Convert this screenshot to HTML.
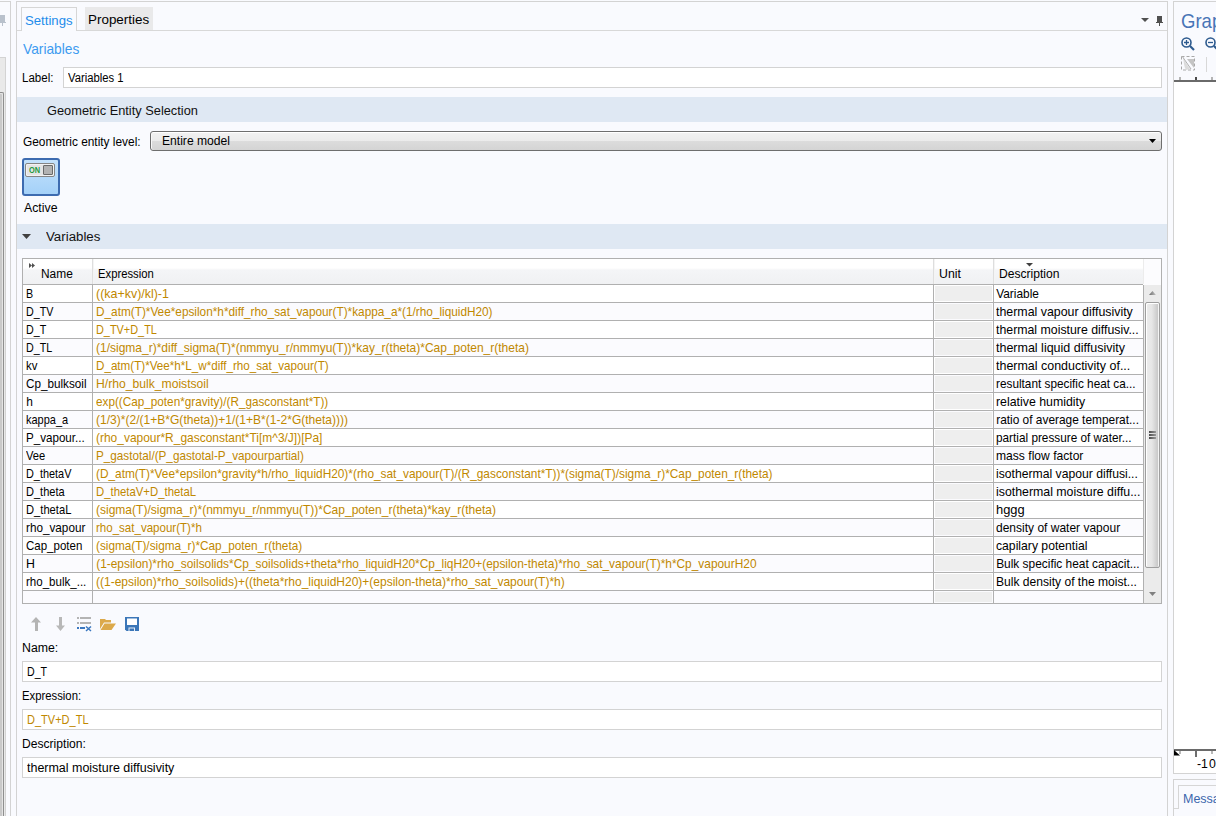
<!DOCTYPE html>
<html><head><meta charset="utf-8">
<style>
*{box-sizing:border-box;margin:0;padding:0}
html,body{width:1216px;height:816px;overflow:hidden;background:#f9fafe;font-family:"Liberation Sans",sans-serif;color:#000;position:relative}
.a{position:absolute;white-space:pre;line-height:1;transform-origin:0 0}
.bx{position:absolute}
svg{position:absolute;overflow:visible}
</style></head><body>
<div class="bx" style="left:10px;top:1px;width:1px;height:815px;background:#d3d3d3"></div>
<div class="bx" style="left:0;top:1px;width:10px;height:1px;background:#d3d3d3"></div>
<div class="bx" style="left:0;top:57px;width:6px;height:759px;background:#e9e9e9;border-right:1px solid #d3d3d3;border-top:1px solid #d3d3d3"></div>
<div class="bx" style="left:0;top:92px;width:4px;height:724px;background:#c9c9c9;border-right:1px solid #8e8e8e;border-top:1px solid #8e8e8e;border-top-right-radius:2px;box-shadow:inset -1px 1px 0 #e4e4e4"></div>
<div class="bx" style="left:0;top:15px;width:5px;height:7px;background:#b9c1cc"></div>
<div class="bx" style="left:0;top:22px;width:6px;height:1px;background:#b9c1cc"></div>
<div class="bx" style="left:2px;top:23px;width:1px;height:3px;background:#b9c1cc"></div>
<div class="bx" style="left:16px;top:1px;width:1152px;height:815px;border-left:1px solid #d3d3d3;border-top:1px solid #d3d3d3;border-right:1px solid #d3d3d3"></div>
<div class="bx" style="left:17px;top:30px;width:1150px;height:1px;background:#d8d8d8"></div>
<div class="bx" style="left:21px;top:7px;width:56px;height:24px;background:#f9fafe;border:1px solid #d6d6d6;border-bottom:none"></div>
<div class="bx" style="left:85px;top:7px;width:68px;height:23px;background:#e9e9ea"></div>
<svg style="left:1141px;top:18px" width="8" height="4"><path d="M0 0H8L4 4Z" fill="#505050"/></svg>
<div class="bx" style="left:1157px;top:16px;width:5px;height:6px;background:#505050"></div>
<div class="bx" style="left:1156px;top:22px;width:7px;height:1px;background:#505050"></div>
<div class="bx" style="left:1159px;top:23px;width:1px;height:3px;background:#505050"></div>
<div class="bx" style="left:63px;top:67px;width:1099px;height:21px;background:#fff;border:1px solid #d3d3d3"></div>
<div class="bx" style="left:17px;top:97px;width:1150px;height:25px;background:#dfe8f3"></div>
<div class="bx" style="left:150px;top:131px;width:1012px;height:20px;border:1px solid #6e6e6e;border-radius:3px;box-shadow:inset 0 1px 0 #fff,inset 1px 0 0 #f8f8f8;background:linear-gradient(#f2f2f2 0,#ebebeb 50%,#dcdcdc 51%,#d4d4d4 100%)"></div>
<svg style="left:1149px;top:139px" width="7" height="4"><path d="M0 0H7L3.5 4Z" fill="#000"/></svg>
<div class="bx" style="left:22px;top:158px;width:38px;height:38px;border:2px solid #3d6bb0;border-radius:3px;background:linear-gradient(#c4e2fc,#a4d1f8)"></div>
<div class="bx" style="left:25px;top:163px;width:30px;height:14px;border:1px solid #858585;border-radius:2px;background:#e4e4e4;box-shadow:inset 0 0 0 1px #f2f2f2"></div>
<div class="a" style="left:28.6px;top:165.5px;font-size:8.6px;font-weight:bold;color:#1f9a3e;transform:scaleX(.86);transform-origin:0 0">ON</div>
<div class="bx" style="left:43px;top:165px;width:10px;height:10px;border:1px solid #6a6a6a;border-radius:1px;background:#b2b2b2"></div>
<div class="bx" style="left:17px;top:224px;width:1150px;height:25px;background:#dfe8f3"></div>
<svg style="left:22px;top:234px" width="9" height="5"><path d="M0 0H9L4.5 5Z" fill="#404040"/></svg>
<div class="bx" style="left:22px;top:258px;width:1140px;height:346px;background:#fff;border:1px solid #b0b0b0"></div>
<div class="bx" style="left:23px;top:259px;width:1120px;height:25px;background:linear-gradient(#fff 0,#fff 36%,#f4f5f7 44%,#f0f1f3 100%)"></div>
<div class="bx" style="left:1143px;top:259px;width:1px;height:25px;background:#ececec"></div>
<div class="bx" style="left:1144px;top:259px;width:17px;height:26px;background:#fcfcfe"></div>
<div class="bx" style="left:92px;top:259px;width:1px;height:25px;background:#dedede"></div>
<div class="bx" style="left:93px;top:259px;width:1px;height:25px;background:#f4f4f4"></div>
<div class="bx" style="left:933px;top:259px;width:1px;height:25px;background:#dedede"></div>
<div class="bx" style="left:934px;top:259px;width:1px;height:25px;background:#f4f4f4"></div>
<div class="bx" style="left:993px;top:259px;width:1px;height:25px;background:#dedede"></div>
<div class="bx" style="left:994px;top:259px;width:1px;height:25px;background:#f4f4f4"></div>
<div class="bx" style="left:23px;top:284px;width:1120px;height:1px;background:#b0b0b0"></div>
<svg style="left:29px;top:263px" width="7" height="5"><path d="M0 0L3 2.5L0 5ZM3 0L6 2.5L3 5Z" fill="#505050"/></svg>
<svg style="left:1026px;top:263px" width="7" height="4"><path d="M0 0H7L3.5 3.5Z" fill="#404040"/></svg>
<div class="bx" style="left:23px;top:285px;width:1120px;height:17px;background:#fff"></div>
<div class="bx" style="left:23px;top:302px;width:1120px;height:1px;background:#b0b0b0"></div>
<div class="bx" style="left:935px;top:286px;width:57px;height:15px;background:#eeeeee"></div>
<div class="bx" style="left:23px;top:303px;width:1120px;height:17px;background:#fbfbfe"></div>
<div class="bx" style="left:23px;top:320px;width:1120px;height:1px;background:#b0b0b0"></div>
<div class="bx" style="left:935px;top:304px;width:57px;height:15px;background:#eeeeee"></div>
<div class="bx" style="left:23px;top:321px;width:1120px;height:17px;background:#fff"></div>
<div class="bx" style="left:23px;top:338px;width:1120px;height:1px;background:#b0b0b0"></div>
<div class="bx" style="left:935px;top:322px;width:57px;height:15px;background:#eeeeee"></div>
<div class="bx" style="left:23px;top:339px;width:1120px;height:17px;background:#fbfbfe"></div>
<div class="bx" style="left:23px;top:356px;width:1120px;height:1px;background:#b0b0b0"></div>
<div class="bx" style="left:935px;top:340px;width:57px;height:15px;background:#eeeeee"></div>
<div class="bx" style="left:23px;top:357px;width:1120px;height:17px;background:#fff"></div>
<div class="bx" style="left:23px;top:374px;width:1120px;height:1px;background:#b0b0b0"></div>
<div class="bx" style="left:935px;top:358px;width:57px;height:15px;background:#eeeeee"></div>
<div class="bx" style="left:23px;top:375px;width:1120px;height:17px;background:#fbfbfe"></div>
<div class="bx" style="left:23px;top:392px;width:1120px;height:1px;background:#b0b0b0"></div>
<div class="bx" style="left:935px;top:376px;width:57px;height:15px;background:#eeeeee"></div>
<div class="bx" style="left:23px;top:393px;width:1120px;height:17px;background:#fff"></div>
<div class="bx" style="left:23px;top:410px;width:1120px;height:1px;background:#b0b0b0"></div>
<div class="bx" style="left:935px;top:394px;width:57px;height:15px;background:#eeeeee"></div>
<div class="bx" style="left:23px;top:411px;width:1120px;height:17px;background:#fbfbfe"></div>
<div class="bx" style="left:23px;top:428px;width:1120px;height:1px;background:#b0b0b0"></div>
<div class="bx" style="left:935px;top:412px;width:57px;height:15px;background:#eeeeee"></div>
<div class="bx" style="left:23px;top:429px;width:1120px;height:17px;background:#fff"></div>
<div class="bx" style="left:23px;top:446px;width:1120px;height:1px;background:#b0b0b0"></div>
<div class="bx" style="left:935px;top:430px;width:57px;height:15px;background:#eeeeee"></div>
<div class="bx" style="left:23px;top:447px;width:1120px;height:17px;background:#fbfbfe"></div>
<div class="bx" style="left:23px;top:464px;width:1120px;height:1px;background:#b0b0b0"></div>
<div class="bx" style="left:935px;top:448px;width:57px;height:15px;background:#eeeeee"></div>
<div class="bx" style="left:23px;top:465px;width:1120px;height:17px;background:#fff"></div>
<div class="bx" style="left:23px;top:482px;width:1120px;height:1px;background:#b0b0b0"></div>
<div class="bx" style="left:935px;top:466px;width:57px;height:15px;background:#eeeeee"></div>
<div class="bx" style="left:23px;top:483px;width:1120px;height:17px;background:#fbfbfe"></div>
<div class="bx" style="left:23px;top:500px;width:1120px;height:1px;background:#b0b0b0"></div>
<div class="bx" style="left:935px;top:484px;width:57px;height:15px;background:#eeeeee"></div>
<div class="bx" style="left:23px;top:501px;width:1120px;height:17px;background:#fff"></div>
<div class="bx" style="left:23px;top:518px;width:1120px;height:1px;background:#b0b0b0"></div>
<div class="bx" style="left:935px;top:502px;width:57px;height:15px;background:#eeeeee"></div>
<div class="bx" style="left:23px;top:519px;width:1120px;height:17px;background:#fbfbfe"></div>
<div class="bx" style="left:23px;top:536px;width:1120px;height:1px;background:#b0b0b0"></div>
<div class="bx" style="left:935px;top:520px;width:57px;height:15px;background:#eeeeee"></div>
<div class="bx" style="left:23px;top:537px;width:1120px;height:17px;background:#fff"></div>
<div class="bx" style="left:23px;top:554px;width:1120px;height:1px;background:#b0b0b0"></div>
<div class="bx" style="left:935px;top:538px;width:57px;height:15px;background:#eeeeee"></div>
<div class="bx" style="left:23px;top:555px;width:1120px;height:17px;background:#fbfbfe"></div>
<div class="bx" style="left:23px;top:572px;width:1120px;height:1px;background:#b0b0b0"></div>
<div class="bx" style="left:935px;top:556px;width:57px;height:15px;background:#eeeeee"></div>
<div class="bx" style="left:23px;top:573px;width:1120px;height:17px;background:#fff"></div>
<div class="bx" style="left:23px;top:590px;width:1120px;height:1px;background:#b0b0b0"></div>
<div class="bx" style="left:935px;top:574px;width:57px;height:15px;background:#eeeeee"></div>
<div class="bx" style="left:23px;top:591px;width:1120px;height:12px;background:#fbfbfe"></div>
<div class="bx" style="left:935px;top:592px;width:57px;height:10px;background:#eeeeee"></div>
<div class="bx" style="left:92px;top:285px;width:1px;height:318px;background:#b0b0b0"></div>
<div class="bx" style="left:933px;top:285px;width:1px;height:318px;background:#b0b0b0"></div>
<div class="bx" style="left:993px;top:285px;width:1px;height:318px;background:#b0b0b0"></div>
<div class="bx" style="left:1143px;top:285px;width:1px;height:318px;background:#b0b0b0"></div>
<div class="a" style="left:26.20px;top:289px;font-size:11.9px;color:#000;transform:scaleX(0.9000);">B</div>
<div class="a" style="left:96.20px;top:289px;font-size:11.9px;color:#c08800;transform:scaleX(1.0464);">((ka+kv)/kl)-1</div>
<div class="a" style="left:996.20px;top:289px;font-size:11.9px;color:#000;">Variable</div>
<div class="a" style="left:26.20px;top:307px;font-size:11.9px;color:#000;transform:scaleX(0.9000);">D_TV</div>
<div class="a" style="left:96.20px;top:307px;font-size:11.9px;color:#c08800;transform:scaleX(0.9922);">D_atm(T)*Vee*epsilon*h*diff_rho_sat_vapour(T)*kappa_a*(1/rho_liquidH20)</div>
<div class="a" style="left:996.20px;top:307px;font-size:11.9px;color:#000;transform:scaleX(1.0420);">thermal vapour diffusivity</div>
<div class="a" style="left:26.20px;top:325px;font-size:11.9px;color:#000;transform:scaleX(0.9000);">D_T</div>
<div class="a" style="left:96.20px;top:325px;font-size:11.9px;color:#c08800;transform:scaleX(0.9167);">D_TV+D_TL</div>
<div class="a" style="left:996.20px;top:325px;font-size:11.9px;color:#000;transform:scaleX(1.0365);">thermal moisture diffusiv...</div>
<div class="a" style="left:26.20px;top:343px;font-size:11.9px;color:#000;transform:scaleX(0.9000);">D_TL</div>
<div class="a" style="left:96.20px;top:343px;font-size:11.9px;color:#c08800;transform:scaleX(1.0084);">(1/sigma_r)*diff_sigma(T)*(nmmyu_r/nmmyu(T))*kay_r(theta)*Cap_poten_r(theta)</div>
<div class="a" style="left:996.20px;top:343px;font-size:11.9px;color:#000;transform:scaleX(1.0504);">thermal liquid diffusivity</div>
<div class="a" style="left:26.20px;top:361px;font-size:11.9px;color:#000;transform:scaleX(0.9583);">kv</div>
<div class="a" style="left:96.20px;top:361px;font-size:11.9px;color:#c08800;transform:scaleX(0.9789);">D_atm(T)*Vee*h*L_w*diff_rho_sat_vapour(T)</div>
<div class="a" style="left:996.20px;top:361px;font-size:11.9px;color:#000;transform:scaleX(1.0472);">thermal conductivity of...</div>
<div class="a" style="left:26.20px;top:379px;font-size:11.9px;color:#000;transform:scaleX(0.9852);">Cp_bulksoil</div>
<div class="a" style="left:96.20px;top:379px;font-size:11.9px;color:#c08800;transform:scaleX(1.0218);">H/rho_bulk_moistsoil</div>
<div class="a" style="left:996.20px;top:379px;font-size:11.9px;color:#000;transform:scaleX(0.9914);">resultant specific heat ca...</div>
<div class="a" style="left:26.20px;top:397px;font-size:11.9px;color:#000;">h</div>
<div class="a" style="left:96.20px;top:397px;font-size:11.9px;color:#c08800;transform:scaleX(0.9872);">exp((Cap_poten*gravity)/(R_gasconstant*T))</div>
<div class="a" style="left:996.20px;top:397px;font-size:11.9px;color:#000;transform:scaleX(1.0384);">relative humidity</div>
<div class="a" style="left:26.20px;top:415px;font-size:11.9px;color:#000;transform:scaleX(0.9239);">kappa_a</div>
<div class="a" style="left:96.20px;top:415px;font-size:11.9px;color:#c08800;transform:scaleX(1.0133);">(1/3)*(2/(1+B*G(theta))+1/(1+B*(1-2*G(theta))))</div>
<div class="a" style="left:996.20px;top:415px;font-size:11.9px;color:#000;">ratio of average temperat...</div>
<div class="a" style="left:26.20px;top:433px;font-size:11.9px;color:#000;transform:scaleX(0.9763);">P_vapour...</div>
<div class="a" style="left:96.20px;top:433px;font-size:11.9px;color:#c08800;transform:scaleX(1.0053);">(rho_vapour*R_gasconstant*Ti[m^3/J])[Pa]</div>
<div class="a" style="left:996.20px;top:433px;font-size:11.9px;color:#000;transform:scaleX(0.9912);">partial pressure of water...</div>
<div class="a" style="left:26.20px;top:451px;font-size:11.9px;color:#000;transform:scaleX(0.9400);">Vee</div>
<div class="a" style="left:96.20px;top:451px;font-size:11.9px;color:#c08800;transform:scaleX(0.9857);">P_gastotal/(P_gastotal-P_vapourpartial)</div>
<div class="a" style="left:996.20px;top:451px;font-size:11.9px;color:#000;transform:scaleX(1.0174);">mass flow factor</div>
<div class="a" style="left:26.20px;top:469px;font-size:11.9px;color:#000;transform:scaleX(0.9160);">D_thetaV</div>
<div class="a" style="left:96.20px;top:469px;font-size:11.9px;color:#c08800;transform:scaleX(0.9968);">(D_atm(T)*Vee*epsilon*gravity*h/rho_liquidH20)*(rho_sat_vapour(T)/(R_gasconstant*T))*(sigma(T)/sigma_r)*Cap_poten_r(theta)</div>
<div class="a" style="left:996.20px;top:469px;font-size:11.9px;color:#000;transform:scaleX(1.0239);">isothermal vapour diffusi...</div>
<div class="a" style="left:26.20px;top:487px;font-size:11.9px;color:#000;transform:scaleX(0.9286);">D_theta</div>
<div class="a" style="left:96.20px;top:487px;font-size:11.9px;color:#c08800;transform:scaleX(0.9552);">D_thetaV+D_thetaL</div>
<div class="a" style="left:996.20px;top:487px;font-size:11.9px;color:#000;transform:scaleX(1.0377);">isothermal moisture diffu...</div>
<div class="a" style="left:26.20px;top:505px;font-size:11.9px;color:#000;transform:scaleX(0.9396);">D_thetaL</div>
<div class="a" style="left:96.20px;top:505px;font-size:11.9px;color:#c08800;transform:scaleX(1.0104);">(sigma(T)/sigma_r)*(nmmyu_r/nmmyu(T))*Cap_poten_r(theta)*kay_r(theta)</div>
<div class="a" style="left:996.20px;top:505px;font-size:11.9px;color:#000;transform:scaleX(1.0846);">hggg</div>
<div class="a" style="left:26.20px;top:523px;font-size:11.9px;color:#000;transform:scaleX(0.9867);">rho_vapour</div>
<div class="a" style="left:96.20px;top:523px;font-size:11.9px;color:#c08800;transform:scaleX(0.9706);">rho_sat_vapour(T)*h</div>
<div class="a" style="left:996.20px;top:523px;font-size:11.9px;color:#000;transform:scaleX(1.0098);">density of water vapour</div>
<div class="a" style="left:26.20px;top:541px;font-size:11.9px;color:#000;transform:scaleX(0.9672);">Cap_poten</div>
<div class="a" style="left:96.20px;top:541px;font-size:11.9px;color:#c08800;transform:scaleX(0.9904);">(sigma(T)/sigma_r)*Cap_poten_r(theta)</div>
<div class="a" style="left:996.20px;top:541px;font-size:11.9px;color:#000;transform:scaleX(1.0247);">capilary potential</div>
<div class="a" style="left:26.20px;top:559px;font-size:11.9px;color:#000;transform:scaleX(1.0375);">H</div>
<div class="a" style="left:96.20px;top:559px;font-size:11.9px;color:#c08800;">(1-epsilon)*rho_soilsolids*Cp_soilsolids+theta*rho_liquidH20*Cp_liqH20+(epsilon-theta)*rho_sat_vapour(T)*h*Cp_vapourH20</div>
<div class="a" style="left:996.20px;top:559px;font-size:11.9px;color:#000;">Bulk specific heat capacit...</div>
<div class="a" style="left:26.20px;top:577px;font-size:11.9px;color:#000;transform:scaleX(0.9705);">rho_bulk_...</div>
<div class="a" style="left:96.20px;top:577px;font-size:11.9px;color:#c08800;transform:scaleX(1.0088);">((1-epsilon)*rho_soilsolids)+((theta*rho_liquidH20)+(epsilon-theta)*rho_sat_vapour(T)*h)</div>
<div class="a" style="left:996.20px;top:577px;font-size:11.9px;color:#000;transform:scaleX(1.0152);">Bulk density of the moist...</div>
<div class="bx" style="left:1144px;top:285px;width:17px;height:318px;background:#ebebeb"></div>
<div class="bx" style="left:1145px;top:302px;width:15px;height:266px;border:1px solid #9e9e9e;border-radius:2px;box-shadow:inset 1px 1px 0 #fff,inset -1px 0 0 #f4f4f4;background:linear-gradient(90deg,#ececec,#e6e6e6 45%,#c9c9c9 90%)"></div>
<svg style="left:1149px;top:291px" width="7" height="4"><defs><linearGradient id="ga"><stop offset="0" stop-color="#6a6a6a"/><stop offset="1" stop-color="#c4c4c4"/></linearGradient></defs><path d="M3.5 0L7 4H0Z" fill="url(#ga)"/></svg>
<svg style="left:1149px;top:592px" width="7" height="4"><path d="M0 0H7L3.5 4Z" fill="#808080"/></svg>
<div class="bx" style="left:1149px;top:431px;width:7px;height:2px;background:linear-gradient(90deg,#4a4a4a,#9a9a9a)"></div>
<div class="bx" style="left:1149px;top:434px;width:7px;height:2px;background:linear-gradient(90deg,#4a4a4a,#9a9a9a)"></div>
<div class="bx" style="left:1149px;top:437px;width:7px;height:2px;background:linear-gradient(90deg,#4a4a4a,#9a9a9a)"></div>
<svg style="left:31px;top:617px" width="11" height="15"><path d="M5 0L10 5.5H7V14H4V5.5H0Z" fill="#b4b4b4"/></svg>
<svg style="left:56px;top:617px" width="10" height="15"><path d="M3 0H6V8.5H9L4.5 14L0 8.5H3Z" fill="#b8b8b8"/></svg>
<svg style="left:77px;top:617px" width="15" height="15"><rect x="0" y="0" width="2" height="2" fill="#b4b4b4"/><rect x="3" y="0" width="11" height="2" fill="#b4b4b4"/><rect x="0" y="5" width="2" height="2" fill="#b4b4b4"/><rect x="3" y="5" width="11" height="2" fill="#b4b4b4"/><rect x="0" y="10" width="2" height="2" fill="#3b78c0"/><rect x="3" y="10" width="5" height="2" fill="#3b78c0"/><path d="M9 9.5L14 14M14 9.5L9 14" stroke="#3b78c0" stroke-width="1.5"/></svg>
<svg style="left:100px;top:619px" width="16" height="11"><path d="M0 0H5L6 1H11V3.5H4L0 10Z" fill="#dca94a"/><path d="M4.5 4.5H16L11.5 11H0.5Z" fill="#dca94a"/></svg>
<svg style="left:125px;top:617px" width="14" height="14"><path d="M0 0H14V14H1.5L0 12.5Z" fill="#3b76b8"/><rect x="2" y="1.5" width="10" height="6.5" fill="#fff"/><rect x="3.5" y="10.5" width="6.5" height="3.5" fill="#e8eef8"/><rect x="4.5" y="11.5" width="4.5" height="2.5" fill="#3b76b8"/></svg>
<div class="bx" style="left:22px;top:661px;width:1140px;height:21px;background:#fff;border:1px solid #d3d3d3"></div>
<div class="bx" style="left:22px;top:709px;width:1140px;height:21px;background:#fff;border:1px solid #d3d3d3"></div>
<div class="bx" style="left:22px;top:757px;width:1140px;height:21px;background:#fff;border:1px solid #d3d3d3"></div>
<div class="bx" style="left:1173px;top:1px;width:43px;height:773px;border-left:1px solid #d3d3d3;border-top:1px solid #d3d3d3;border-bottom:1px solid #d3d3d3"></div>
<div class="bx" style="left:1174px;top:82px;width:42px;height:691px;background:#fff"></div>
<svg style="left:1181px;top:37px" width="14" height="14"><circle cx="5.5" cy="5.5" r="4.5" fill="none" stroke="#2d5a8e" stroke-width="1.6"/><path d="M3 5.5H8M5.5 3V8" stroke="#2d5a8e" stroke-width="1.3"/><path d="M9 9L13 13" stroke="#2d5a8e" stroke-width="2.2"/></svg>
<svg style="left:1205px;top:37px" width="14" height="14"><circle cx="5.5" cy="5.5" r="4.5" fill="none" stroke="#2d5a8e" stroke-width="1.6"/><path d="M3 5.5H8" stroke="#2d5a8e" stroke-width="1.3"/><path d="M9 9L13 13" stroke="#2d5a8e" stroke-width="2.2"/></svg>
<svg style="left:1181px;top:56px" width="14" height="15"><rect x="0.5" y="0.5" width="13" height="13.5" fill="none" stroke="#a8a8a8" stroke-dasharray="3 2"/><path d="M6 3H13V12Z" fill="#c4c4c4"/><path d="M2 1C4 6 7 10 9 13L5 14C3 11 3 7 2 1Z" fill="#dcdcdc"/><path d="M1 0L10 13" stroke="#b0b0b0" stroke-width="1"/></svg>
<div class="bx" style="left:1206px;top:57px;width:1px;height:15px;background:#d8d8d8"></div>
<div class="bx" style="left:1174px;top:80px;width:42px;height:2px;background:#6a6a6a"></div>
<div class="bx" style="left:1179px;top:77px;width:2px;height:3px;background:#b4b4b4"></div>
<div class="bx" style="left:1195px;top:77px;width:2px;height:3px;background:#4a4a4a"></div>
<div class="bx" style="left:1211px;top:77px;width:2px;height:3px;background:#b4b4b4"></div>
<div class="bx" style="left:1174px;top:749px;width:42px;height:2px;background:#6a6a6a"></div>
<svg style="left:1174px;top:750px" width="6" height="6"><path d="M0 0L6 5.5H0Z" fill="#000"/></svg>
<div class="bx" style="left:1179px;top:751px;width:2px;height:3px;background:#b8b8b8"></div>
<div class="bx" style="left:1195px;top:751px;width:2px;height:6px;background:#6e6e6e"></div>
<div class="bx" style="left:1211px;top:751px;width:2px;height:3px;background:#b8b8b8"></div>
<div class="bx" style="left:1173px;top:779px;width:43px;height:37px;border-left:1px solid #d3d3d3;border-top:1px solid #d3d3d3"></div>
<div class="bx" style="left:1174px;top:808px;width:5px;height:1px;background:#d6d6d6"></div>
<div class="bx" style="left:1178px;top:785px;width:38px;height:24px;border-left:1px solid #d6d6d6;border-top:1px solid #d6d6d6"></div>
<div class="a" style="left:24.93px;top:15px;font-size:12.3px;color:#1e8ceb;transform:scaleX(1.0698);">Settings</div>
<div class="a" style="left:87.91px;top:14px;font-size:12.3px;color:#000;transform:scaleX(1.0909);">Properties</div>
<div class="a" style="left:23.00px;top:41px;font-size:15px;color:#3d9af0;transform:scaleX(0.9180);">Variables</div>
<div class="a" style="left:22.06px;top:72px;font-size:12.3px;color:#000;transform:scaleX(0.9375);">Label:</div>
<div class="a" style="left:68.00px;top:72px;font-size:12.3px;color:#000;transform:scaleX(0.9167);">Variables 1</div>
<div class="a" style="left:47.00px;top:105px;font-size:12.3px;color:#111;transform:scaleX(1.0417);">Geometric Entity Selection</div>
<div class="a" style="left:23.00px;top:136px;font-size:12.3px;color:#000;transform:scaleX(0.9669);">Geometric entity level:</div>
<div class="a" style="left:162.01px;top:135px;font-size:12.3px;color:#000;transform:scaleX(0.9851);">Entire model</div>
<div class="a" style="left:24.00px;top:202px;font-size:12.3px;color:#000;">Active</div>
<div class="a" style="left:46.00px;top:231px;font-size:12.3px;color:#111;transform:scaleX(1.0800);">Variables</div>
<div class="a" style="left:41.03px;top:268px;font-size:12.3px;color:#000;transform:scaleX(0.9688);">Name</div>
<div class="a" style="left:98.08px;top:268px;font-size:12.3px;color:#000;transform:scaleX(0.9153);">Expression</div>
<div class="a" style="left:939.00px;top:268px;font-size:12.3px;color:#000;">Unit</div>
<div class="a" style="left:999.02px;top:268px;font-size:12.3px;color:#000;transform:scaleX(0.9833);">Description</div>
<div class="a" style="left:22.00px;top:642px;font-size:12.3px;color:#000;">Name:</div>
<div class="a" style="left:27.14px;top:666px;font-size:12.3px;color:#000;transform:scaleX(0.8636);">D_T</div>
<div class="a" style="left:22.08px;top:690px;font-size:12.3px;color:#000;transform:scaleX(0.9194);">Expression:</div>
<div class="a" style="left:27.10px;top:714px;font-size:12.3px;color:#c08800;transform:scaleX(0.8955);">D_TV+D_TL</div>
<div class="a" style="left:22.02px;top:738px;font-size:12.3px;color:#000;transform:scaleX(0.9841);">Description:</div>
<div class="a" style="left:27.00px;top:762px;font-size:12.3px;color:#000;transform:scaleX(1.0138);">thermal moisture diffusivity</div>
<div class="a" style="left:1181.12px;top:10px;font-size:21px;color:#4874b6;transform:scaleX(0.8824);">Graphics</div>
<div class="a" style="left:1197.00px;top:758px;font-size:12.3px;color:#000;">-1</div>
<div class="a" style="left:1209.00px;top:758px;font-size:12.3px;color:#000;">0</div>
<div class="a" style="left:1183.00px;top:793px;font-size:12.5px;color:#3a66ac;">Messages</div>
</body></html>
